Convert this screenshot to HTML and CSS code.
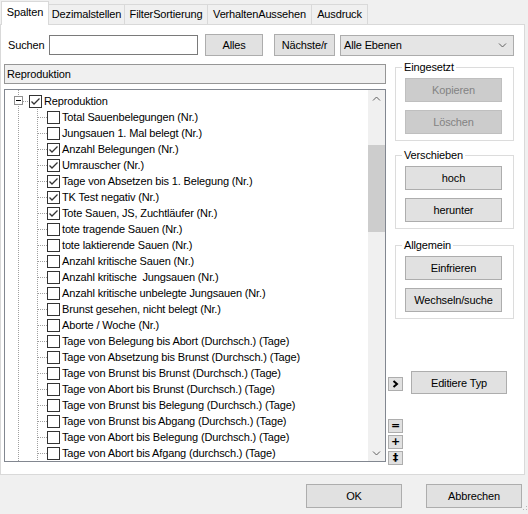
FILE: index.html
```html
<!DOCTYPE html>
<html lang="de">
<head>
  <meta charset="UTF-8" />
  <title>Spalten</title>
  <link rel="stylesheet" href="styles.css">
</head>
<body>
<div class="dialog">

  <!-- Tabs -->
  <div class="tabs">
    <div class="tab active tab-spalten">Spalten</div>
    <div class="tab tab-dezimal">Dezimalstellen</div>
    <div class="tab tab-filter">FilterSortierung</div>
    <div class="tab tab-verhalten">VerhaltenAussehen</div>
    <div class="tab tab-ausdruck">Ausdruck</div>
  </div>

  <div class="page">
    <!-- Suche -->
    <div class="search-row">
      <span class="lbl">Suchen</span>
      <input class="search-input" type="text">
      <button class="btn btn-alles">Alles</button>
      <button class="btn btn-next">Nächste/r</button>
      <div class="combo">
        <span>Alle Ebenen</span>
        <svg width="9" height="6" viewBox="0 0 9 6"><path d="M1 1.5 L4.5 5 L8 1.5" fill="none" stroke="#606060"/></svg>
      </div>
    </div>

    <div class="main">
      <div class="left">
        <div class="header-bar">Reproduktion</div>
        <div class="list">
          <div class="tree">
            <div class="row root">
              <svg class="expander" width="9" height="9" viewBox="0 0 9 9"><rect x="0.5" y="0.5" width="8" height="8" fill="#fff" stroke="#919191"/><path d="M2 4.5h5" stroke="#000"/></svg>
              <span class="hline short"></span>
              <span class="cb checked"><svg width="11" height="11" viewBox="0 0 11 11"><path d="M1.5 5.5 L4 8 L9.5 2.5" fill="none" stroke="#333" stroke-width="1.3"/></svg></span>
              <span class="txt root-txt">Reproduktion</span>
            </div>
            <div class="children">
              <div class="row"><span class="hline"></span><span class="cb"></span><span class="txt">Total Sauenbelegungen (Nr.)</span></div>
              <div class="row"><span class="hline"></span><span class="cb"></span><span class="txt">Jungsauen 1. Mal belegt (Nr.)</span></div>
              <div class="row"><span class="hline"></span><span class="cb checked"><svg width="11" height="11" viewBox="0 0 11 11"><path d="M1.5 5.5 L4 8 L9.5 2.5" fill="none" stroke="#333" stroke-width="1.3"/></svg></span><span class="txt">Anzahl Belegungen (Nr.)</span></div>
              <div class="row"><span class="hline"></span><span class="cb checked"><svg width="11" height="11" viewBox="0 0 11 11"><path d="M1.5 5.5 L4 8 L9.5 2.5" fill="none" stroke="#333" stroke-width="1.3"/></svg></span><span class="txt">Umrauscher (Nr.)</span></div>
              <div class="row"><span class="hline"></span><span class="cb checked"><svg width="11" height="11" viewBox="0 0 11 11"><path d="M1.5 5.5 L4 8 L9.5 2.5" fill="none" stroke="#333" stroke-width="1.3"/></svg></span><span class="txt">Tage von Absetzen bis 1. Belegung (Nr.)</span></div>
              <div class="row"><span class="hline"></span><span class="cb checked"><svg width="11" height="11" viewBox="0 0 11 11"><path d="M1.5 5.5 L4 8 L9.5 2.5" fill="none" stroke="#333" stroke-width="1.3"/></svg></span><span class="txt">TK Test negativ (Nr.)</span></div>
              <div class="row"><span class="hline"></span><span class="cb checked"><svg width="11" height="11" viewBox="0 0 11 11"><path d="M1.5 5.5 L4 8 L9.5 2.5" fill="none" stroke="#333" stroke-width="1.3"/></svg></span><span class="txt">Tote Sauen, JS, Zuchtläufer (Nr.)</span></div>
              <div class="row"><span class="hline"></span><span class="cb"></span><span class="txt">tote tragende Sauen (Nr.)</span></div>
              <div class="row"><span class="hline"></span><span class="cb"></span><span class="txt">tote laktierende Sauen (Nr.)</span></div>
              <div class="row"><span class="hline"></span><span class="cb"></span><span class="txt">Anzahl kritische Sauen (Nr.)</span></div>
              <div class="row"><span class="hline"></span><span class="cb"></span><span class="txt">Anzahl kritische&nbsp; Jungsauen (Nr.)</span></div>
              <div class="row"><span class="hline"></span><span class="cb"></span><span class="txt">Anzahl kritische unbelegte Jungsauen (Nr.)</span></div>
              <div class="row"><span class="hline"></span><span class="cb"></span><span class="txt">Brunst gesehen, nicht belegt (Nr.)</span></div>
              <div class="row"><span class="hline"></span><span class="cb"></span><span class="txt">Aborte / Woche (Nr.)</span></div>
              <div class="row"><span class="hline"></span><span class="cb"></span><span class="txt">Tage von Belegung bis Abort (Durchsch.) (Tage)</span></div>
              <div class="row"><span class="hline"></span><span class="cb"></span><span class="txt">Tage von Absetzung bis Brunst (Durchsch.) (Tage)</span></div>
              <div class="row"><span class="hline"></span><span class="cb"></span><span class="txt">Tage von Brunst bis Brunst (Durchsch.) (Tage)</span></div>
              <div class="row"><span class="hline"></span><span class="cb"></span><span class="txt">Tage von Abort bis Brunst (Durchsch.) (Tage)</span></div>
              <div class="row"><span class="hline"></span><span class="cb"></span><span class="txt">Tage von Brunst bis Belegung (Durchsch.) (Tage)</span></div>
              <div class="row"><span class="hline"></span><span class="cb"></span><span class="txt">Tage von Brunst bis Abgang (Durchsch.) (Tage)</span></div>
              <div class="row"><span class="hline"></span><span class="cb"></span><span class="txt">Tage von Abort bis Belegung (Durchsch.) (Tage)</span></div>
              <div class="row"><span class="hline"></span><span class="cb"></span><span class="txt">Tage von Abort bis Afgang (durchsch.) (Tage)</span></div>
            </div>
          </div>
          <div class="vscroll">
            <div class="sb-arrow"><svg width="9" height="6" viewBox="0 0 9 6"><path d="M1 4.5 L4.5 1 L8 4.5" fill="none" stroke="#606060"/></svg></div>
            <div class="sb-track"><div class="sb-thumb"></div></div>
            <div class="sb-arrow"><svg width="9" height="6" viewBox="0 0 9 6"><path d="M1 1.5 L4.5 5 L8 1.5" fill="none" stroke="#606060"/></svg></div>
          </div>
        </div>
      </div>

      <div class="right">
        <fieldset class="group g1">
          <legend>Eingesetzt</legend>
          <button class="btn gbtn disabled">Kopieren</button>
          <button class="btn gbtn disabled">Löschen</button>
        </fieldset>
        <fieldset class="group g2">
          <legend>Verschieben</legend>
          <button class="btn gbtn">hoch</button>
          <button class="btn gbtn">herunter</button>
        </fieldset>
        <fieldset class="group g3">
          <legend>Allgemein</legend>
          <button class="btn gbtn">Einfrieren</button>
          <button class="btn gbtn">Wechseln/suche</button>
        </fieldset>

        <div class="edit-row">
          <button class="mini mini-arrow"><svg width="7" height="8" viewBox="0 0 7 8"><path d="M1.5 1 L5 4 L1.5 7" fill="none" stroke="#000" stroke-width="2"/></svg></button>
          <button class="btn btn-edit">Editiere Typ</button>
        </div>

        <div class="mini-stack">
          <button class="mini">=</button>
          <button class="mini">+</button>
          <button class="mini">‡</button>
        </div>
      </div>
    </div>
  </div>

  <!-- Unten -->
  <div class="footer">
    <button class="btn btn-foot">OK</button>
    <button class="btn btn-foot btn-cancel">Abbrechen</button>
    <svg class="grip" width="6" height="9" viewBox="0 0 6 9"><rect x="4" y="2" width="1" height="1" fill="#b5b5b5"/><rect x="4" y="5" width="1" height="1" fill="#b5b5b5"/><rect x="1" y="5" width="1" height="1" fill="#b5b5b5"/></svg>
  </div>
</div>
</body>
</html>
```

FILE: styles.css
```css
* {
  box-sizing: border-box;
}
body {
  margin: 0;
  background-color: #f0f0f0;
  font-family: "Liberation Sans", Arial, sans-serif;
  font-size: 11px;
  color: #000;
  letter-spacing: -0.15px;
}
.dialog {
  width: 528px;
  height: 514px;
}

/* Tabs */
.tabs {
  display: flex;
  align-items: flex-end;
  height: 24px;
  padding-left: 1px;
}
.tab {
  height: 20px;
  line-height: 19px;
  text-align: center;
  border: 1px solid #d9d9d9;
  border-bottom: none;
  margin-left: -1px;
  background-color: #f0f0f0;
  white-space: nowrap;
}
.tab.active {
  height: 24px;
  line-height: 21px;
  margin-left: 0;
  margin-bottom: -1px;
  background-color: #fff;
  position: relative;
  z-index: 1;
}
.tab-spalten { width: 48px; }
.tab-dezimal { width: 77px; }
.tab-filter { width: 84px; }
.tab-verhalten { width: 105px; }
.tab-ausdruck { width: 57px; }

/* Seite */
.page {
  width: 525px;
  height: 451px;
  background-color: #fff;
  border: 1px solid #d9d9d9;
  padding: 9px 0 0 3px;
}

.btn {
  font-family: inherit;
  font-size: 11px;
  letter-spacing: -0.15px;
  color: #000;
  background-color: #e1e1e1;
  border: 1px solid #adadad;
  padding: 0;
  margin: 0;
}
.btn.disabled {
  background-color: #cccccc;
  border-color: #bfbfbf;
  color: #838383;
}

/* Suchzeile */
.search-row {
  display: flex;
  align-items: center;
  height: 22px;
}
.lbl {
  width: 41px;
  margin-left: 4px;
}
.search-input {
  width: 149px;
  height: 20px;
  border: 1px solid #7a7a7a;
  margin: 0;
  padding: 0;
}
.btn-alles {
  width: 58px;
  height: 22px;
  margin-left: 7px;
}
.btn-next {
  width: 61px;
  height: 22px;
  margin-left: 11px;
}
.combo {
  display: flex;
  align-items: center;
  justify-content: space-between;
  width: 174px;
  height: 21px;
  margin-left: 5px;
  padding: 0 6px 0 3px;
  background-color: #e5e5e5;
  border: 1px solid #acacac;
}

/* Hauptbereich */
.main {
  display: flex;
  margin-top: 5px;
}
.left {
  width: 382px;
  padding-top: 3px;
}
.header-bar {
  height: 20px;
  line-height: 18px;
  padding-left: 2px;
  background-color: #f0f0f0;
  border: 1px solid #969696;
}
.list {
  display: flex;
  height: 373px;
  margin-top: 5px;
  border: 1px solid #828790;
  background-color: #fff;
}
.tree {
  flex: 1;
  overflow: hidden;
  padding-top: 3px;
  background: linear-gradient(#a0a0a0 50%, transparent 50%) 13px 0 / 1px 2px repeat-y;
}
.row {
  display: flex;
  align-items: center;
  height: 16px;
  white-space: nowrap;
}
.root {
  padding-left: 9px;
}
.expander {
  flex: none;
  margin-top: -1px;
}
.hline {
  flex: none;
  width: 9px;
  height: 1px;
  margin-left: 1px;
  background: repeating-linear-gradient(to right, #a0a0a0 0 1px, transparent 1px 2px);
}
.hline.short {
  width: 6px;
  margin-left: 0;
}
.cb {
  flex: none;
  width: 13px;
  height: 13px;
  border: 1px solid #333;
  background-color: #fff;
}
.cb svg {
  display: block;
}
.txt {
  margin-left: 2px;
  line-height: 16px;
}
.children {
  margin-left: 32px;
  background: linear-gradient(#a0a0a0 50%, transparent 50%) 0 0 / 1px 2px repeat-y;
}

/* Scrollbar */
.vscroll {
  display: flex;
  flex-direction: column;
  width: 17px;
  background-color: #f0f0f0;
}
.sb-arrow {
  display: flex;
  align-items: center;
  justify-content: center;
  height: 17px;
}
.sb-track {
  flex: 1;
}
.sb-thumb {
  height: 87px;
  margin-top: 38px;
  background-color: #cdcdcd;
}

/* Rechte Spalte */
.right {
  display: flex;
  flex-direction: column;
  width: 126px;
  margin-left: 2px;
}
.group {
  width: 119px;
  margin: 0 0 0 7px;
  padding: 4px 0 6px 0;
  border: 1px solid #dcdcdc;
  min-inline-size: 0;
}
.group legend {
  margin-left: 6px;
  padding: 0 2px;
  line-height: 13px;
}
.g2 { margin-top: 8px; }
.g3 { margin-top: 10px; }
.gbtn {
  display: block;
  width: 97px;
  height: 24px;
  margin-left: 9px;
}
.gbtn + .gbtn {
  margin-top: 8px;
}

.edit-row {
  display: flex;
  align-items: flex-start;
  margin-top: 52px;
}
.mini {
  display: flex;
  align-items: center;
  justify-content: center;
  width: 15px;
  height: 14px;
  padding: 0;
  margin: 0;
  font-family: "DejaVu Sans", sans-serif;
  font-size: 11px;
  font-weight: bold;
  line-height: 12px;
  color: #000;
  background-color: #e1e1e1;
  border: 1px solid #adadad;
}
.mini-arrow {
  margin-top: 6px;
}
.btn-edit {
  width: 96px;
  height: 23px;
  margin-left: 8px;
}
.mini-stack {
  display: flex;
  flex-direction: column;
  gap: 2px;
  margin-top: 25px;
}

/* Unten */
.footer {
  display: flex;
  justify-content: flex-end;
  padding-top: 9px;
}
.btn-foot {
  width: 96px;
  height: 24px;
}
.btn-cancel {
  margin-left: 24px;
}
.grip {
  align-self: flex-end;
  margin-top: 20px;
}
```
